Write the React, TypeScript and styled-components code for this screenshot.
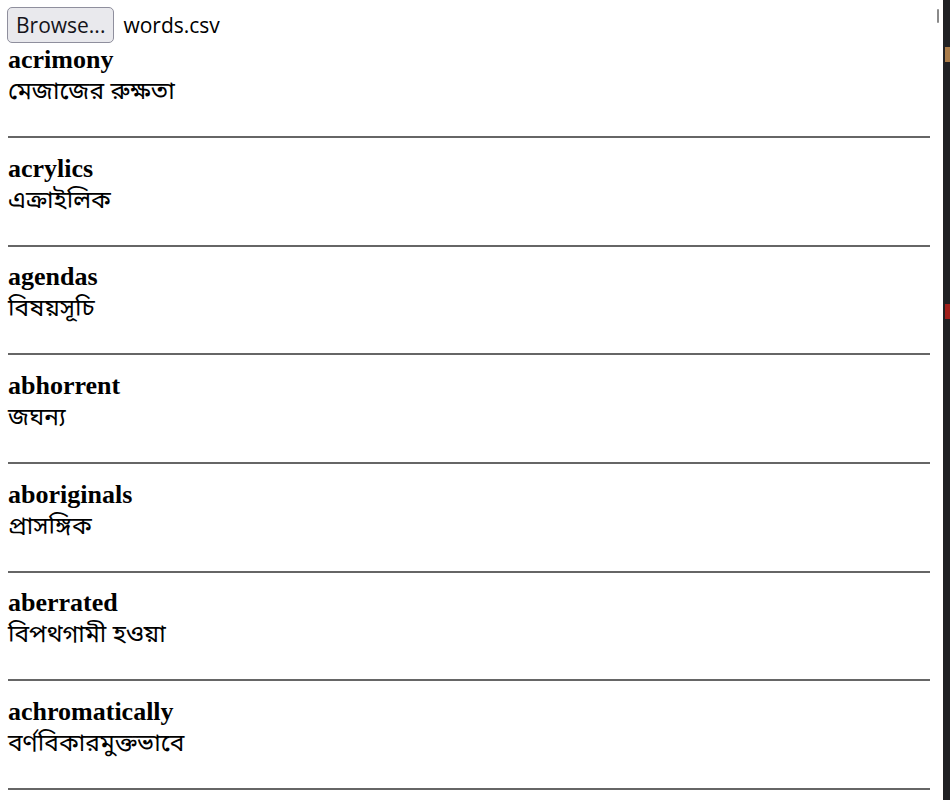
import * as React from 'react';
import styled, { createGlobalStyle } from 'styled-components';

const GlobalStyle = createGlobalStyle`
    html, body {
        margin: 0;
        padding: 0;
        background: #ffffff;
        overflow: hidden;
    }
`;

const Frame = styled.div`
    display: flex;
    flex-direction: row;
    width: 950px;
    height: 800px;
    overflow: hidden;
`;

const Page = styled.div`
    position: relative;
    flex: 1;
    padding: 7px 13px 0 8px;
    background: #ffffff;
`;

const ScrollThumb = styled.div`
    position: absolute;
    top: 9px;
    right: 4px;
    width: 2px;
    height: 14px;
    border-radius: 1px;
    background: #8a8a8a;
`;

const SideStrip = styled.div`
    width: 7px;
    background: #202124;
    display: flex;
    flex-direction: column;
    align-items: flex-end;
    padding-top: 47px;
`;

const Mark = styled.div<{ $color: string; $gap: number }>`
    width: 5px;
    height: 15px;
    margin-top: ${p => p.$gap}px;
    background: ${p => p.$color};
`;

const FileRow = styled.div`
    display: flex;
    align-items: flex-start;
    gap: 9px;
    height: 39px;
`;

const BrowseButton = styled.button`
    height: 36px;
    margin-left: -1px;
    padding: 0 8px;
    font-family: "Open Sans", "Liberation Sans", sans-serif;
    font-size: 21px;
    color: #15141a;
    background: #e9e9ed;
    border: 1px solid #8f8f9d;
    border-radius: 5px;
`;

const FileName = styled.span`
    font-family: "Open Sans", "Liberation Sans", sans-serif;
    font-size: 21px;
    line-height: 36px;
    color: #000000;
`;

const Entry = styled.div`
    display: flex;
    flex-direction: column;
`;

const Word = styled.b`
    font-family: "Liberation Serif", "Times New Roman", serif;
    font-size: 26px;
    font-weight: bold;
    line-height: 28px;
    color: #000000;
`;

const Meaning = styled.span`
    font-family: "Noto Sans", "Noto Sans Bengali", "DejaVu Sans", sans-serif;
    font-size: 24.5px;
    line-height: 32px;
    color: #000000;
`;

const Rule = styled.hr`
    margin: 30px 0 16.67px 0;
    border: none;
    border-top: 2px solid #666666;
    height: 0;
`;

const words: { word: string; meaning: string }[] = [
    { word: 'acrimony', meaning: 'মেজাজের রুক্ষতা' },
    { word: 'acrylics', meaning: 'এক্রাইলিক' },
    { word: 'agendas', meaning: 'বিষয়সূচি' },
    { word: 'abhorrent', meaning: 'জঘন্য' },
    { word: 'aboriginals', meaning: 'প্রাসঙ্গিক' },
    { word: 'aberrated', meaning: 'বিপথগামী হওয়া' },
    { word: 'achromatically', meaning: 'বর্ণবিকারমুক্তভাবে' },
];

export default function App() {
    return (
        <>
            <GlobalStyle />
            <Frame>
                <Page>
                    <ScrollThumb />
                    <FileRow>
                        <BrowseButton type="button">Browse...</BrowseButton>
                        <FileName>words.csv</FileName>
                    </FileRow>
                    {words.map(item => (
                        <Entry key={item.word}>
                            <Word>{item.word}</Word>
                            <Meaning>{item.meaning}</Meaning>
                            <Rule />
                        </Entry>
                    ))}
                </Page>
                <SideStrip>
                    <Mark $color="#a97c4a" $gap={0} />
                    <Mark $color="#a0201c" $gap={242} />
                </SideStrip>
            </Frame>
        </>
    );
}
